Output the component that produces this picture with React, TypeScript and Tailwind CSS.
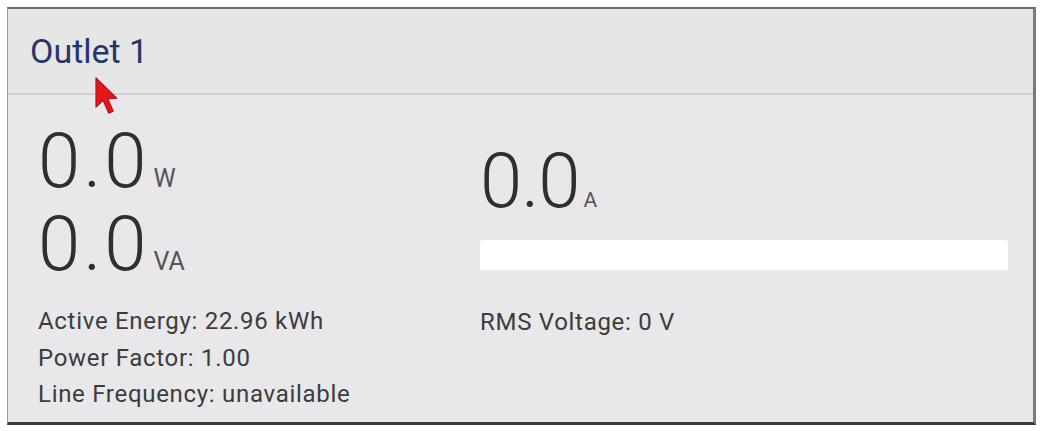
import React from "react";

function Cursor() {
  return (
    <svg
      className="absolute left-[86px] top-[67px]"
      width="24"
      height="40"
      viewBox="0 0 12 20"
    >
      <path
        d="M1 1 L1 15.5 L4.6 12.2 L7.4 18.6 L9.6 17.6 L6.9 11.3 L11.4 11.1 Z"
        fill="#e8141b"
        stroke="#b5121a"
        strokeWidth="0.6"
        strokeLinejoin="round"
      />
    </svg>
  );
}

export default function App() {
  return (
    <div className="min-h-[431px] w-[1043px] bg-white pt-[7px] pl-[7px]" style={{ fontFamily: "Roboto, 'Liberation Sans', sans-serif" }}>
      <div className="relative w-[1029px] h-[418px] bg-[#e8e7ea] border-t-2 border-t-[#6e6e6e] border-l border-l-[#9a9a9a] border-r-[3px] border-r-[#7a7a7a] border-b-[3px] border-b-[#3a3a3a] flex flex-col">
        <div className="h-[86px] flex items-center pl-[22px] bg-[#e6e6e7] border-b-2 border-b-[#cfcfd3]">
          <span className="text-[34px] leading-[40px] text-[#263668]">Outlet 1</span>
        </div>
        <div className="flex-1 grid grid-cols-[442px_1fr] pl-[30px] pr-[25px] pt-[25px]">
          <div className="flex flex-col">
            <div className="flex items-baseline h-[83px] leading-[83px]">
              <span className="text-[76px] font-light text-[#2f2f2f] tracking-[3px]">0.0</span>
              <span className="text-[25px] text-[#555] ml-[4px]">W</span>
            </div>
            <div className="flex items-baseline h-[83px] leading-[83px]">
              <span className="text-[76px] font-light text-[#2f2f2f] tracking-[3px]">0.0</span>
              <span className="text-[25px] text-[#555] ml-[4px]">VA</span>
            </div>
            <div className="mt-[17px] text-[24px] leading-[36.5px] tracking-[0.7px] text-[#3c3c3c]">
              <div>Active Energy: 22.96 kWh</div>
              <div>Power Factor: 1.00</div>
              <div>Line Frequency: unavailable</div>
            </div>
          </div>
          <div className="flex flex-col pt-[20px]">
            <div className="flex items-baseline h-[83px] leading-[83px]">
              <span className="text-[76px] font-light text-[#2f2f2f] tracking-[-1px]">0.0</span>
              <span className="text-[21px] text-[#555] ml-[4px]">A</span>
            </div>
            <div className="mt-[17px] h-[30px] rounded-[3px] bg-white" />
            <div className="mt-[34px] text-[24px] leading-[36.5px] tracking-[0.7px] text-[#3c3c3c]">RMS Voltage: 0 V</div>
          </div>
        </div>
        <Cursor />
      </div>
    </div>
  );
}
